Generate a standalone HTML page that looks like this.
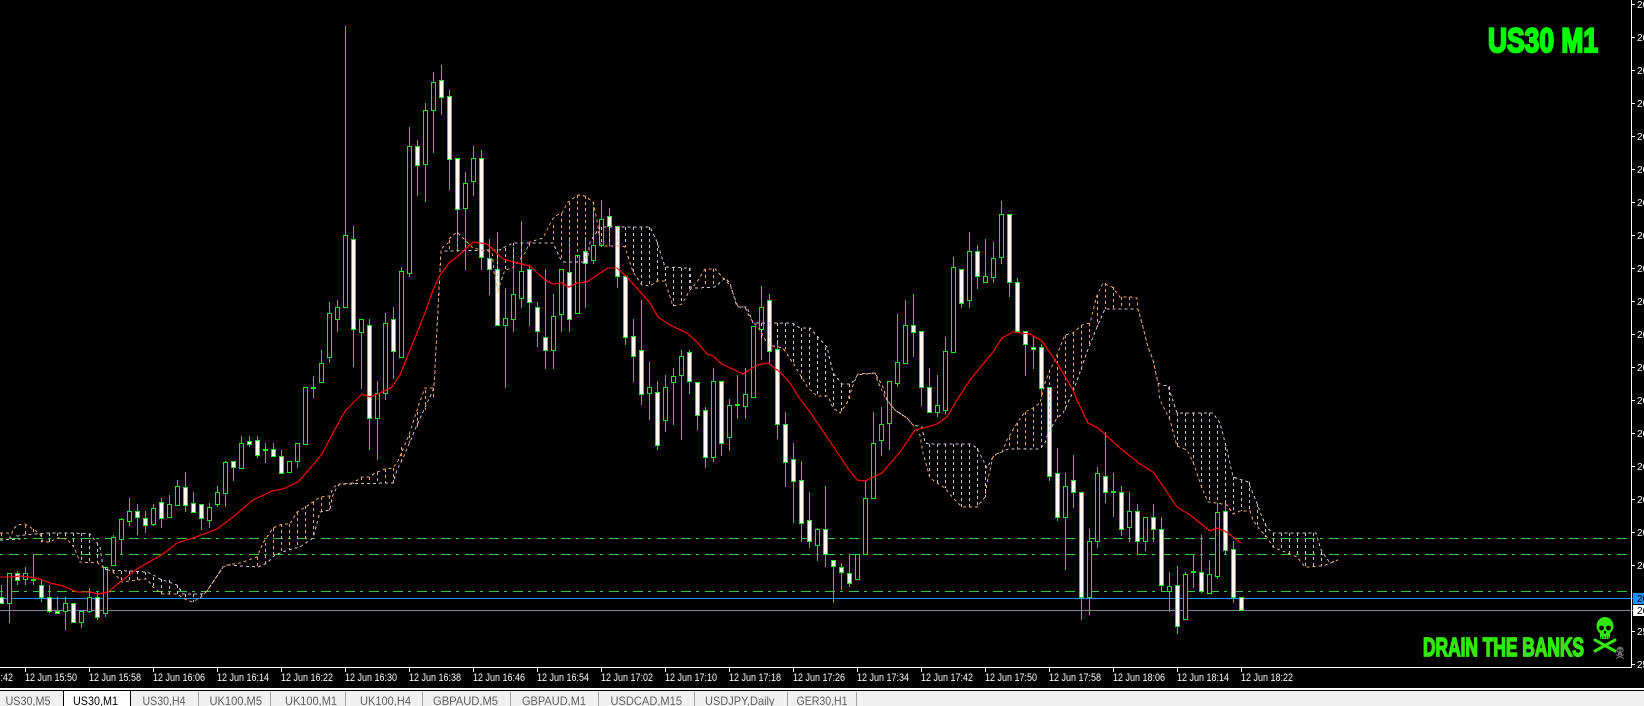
<!DOCTYPE html>
<html><head><meta charset="utf-8"><title>US30 M1</title>
<style>html,body{margin:0;padding:0;background:#000;width:1644px;height:706px;overflow:hidden}svg{display:block}text{font-family:"Liberation Sans",sans-serif}</style>
</head><body>
<svg xmlns="http://www.w3.org/2000/svg" width="1644" height="706" viewBox="0 0 1644 706">
<rect width="1644" height="706" fill="#000"/>
<!-- levels -->
<g shape-rendering="crispEdges" fill="none">
<g stroke="#32cd32" stroke-dasharray="10 5 3 6">
<path d="M-15 538.5H1630M-15 554.5H1630M-15 591.5H1630"/>
</g>
<path d="M0 598.5H1633" stroke="#1e90ff"/>
<path d="M0 610.5H1633" stroke="#778899"/>
</g>
<!-- wicks -->
<path fill="none" stroke="#12e612" shape-rendering="crispEdges" d="M1.5 585V603M9.5 573V623M17.5 571V585M25.5 567V585M33.5 555V585M41.5 580V602M49.5 585V613M57.5 597V613M65.5 597V630M73.5 603V622M81.5 611V628M89.5 588V613M97.5 592V620M105.5 567V617M113.5 535V565M121.5 518V555M129.5 498V526M137.5 504V535M145.5 511V533M153.5 504V526M161.5 498V528M169.5 495V517M177.5 480V505M185.5 472V512M193.5 492V513M201.5 504V530M209.5 503V528M217.5 486V507M225.5 461V507M233.5 461V481M241.5 436V468M249.5 436V447M257.5 436V458M265.5 443V463M273.5 443V457M281.5 450V473M297.5 443V468M313.5 376V398M321.5 350V382M329.5 302V363M337.5 300V332M345.5 26V307M353.5 226V367M361.5 319V389M369.5 319V450M377.5 381V460M385.5 313V400M393.5 307V379M401.5 267V357M409.5 127V277M417.5 140V196M425.5 103V202M433.5 72V153M441.5 65V115M449.5 90V190M457.5 158V252M465.5 172V270M473.5 146V196M481.5 150V270M489.5 239V295M497.5 232V325M505.5 288V388M513.5 247V332M521.5 221V308M529.5 265V326M537.5 302V347M545.5 269V369M553.5 294V369M561.5 269V332M569.5 237V332M585.5 237V308M593.5 207V264M601.5 200V247M609.5 208V246M617.5 226V288M625.5 276V345M633.5 319V382M641.5 300V405M649.5 362V420M657.5 381V450M665.5 375V432M673.5 368V425M681.5 350V440M689.5 350V394M697.5 382V430M705.5 407V468M713.5 368V462M721.5 381V456M729.5 399V451M737.5 375V419M745.5 368V419M761.5 286V360M769.5 294V363M777.5 340V439M785.5 412V487M793.5 443V523M801.5 461V542M809.5 492V548M817.5 528V561M825.5 486V567M833.5 560V603M841.5 563V590M849.5 554V587M865.5 480V554M873.5 412V498M881.5 407V456M889.5 381V450M897.5 314V387M905.5 300V363M913.5 294V357M921.5 331V406M929.5 368V412M937.5 375V417M945.5 337V414M953.5 257V352M961.5 269V308M969.5 232V308M977.5 245V289M985.5 239V282M993.5 242V283M1001.5 201V264M1009.5 214V297M1017.5 278V331M1025.5 331V376M1033.5 337V369M1041.5 344V397M1049.5 387V481M1057.5 448V521M1065.5 473V570M1073.5 455V508M1081.5 492V620M1089.5 529V615M1097.5 467V548M1105.5 432V503M1113.5 473V517M1121.5 486V536M1129.5 492V542M1137.5 504V555M1145.5 517V551M1153.5 504V542M1161.5 517V592M1169.5 572V612M1177.5 566V634M1185.5 572V619M1193.5 554V588M1201.5 535V593M1209.5 560V593M1217.5 503V579M1225.5 500V555M1233.5 541V603M1241.5 597V610"/>
<!-- bear/black bodies -->
<path fill="#000" stroke="#00ff00" shape-rendering="crispEdges" d="M7.5 573.5h4v30h-4zM23.5 573.5h4v6h-4zM63.5 603.5h4v8h-4zM79.5 611.5h4v11h-4zM87.5 597.5h4v14h-4zM103.5 567.5h4v46h-4zM111.5 537.5h4v28h-4zM119.5 519.5h4v20h-4zM127.5 511.5h4v10h-4zM151.5 508.5h4v16h-4zM167.5 504.5h4v13h-4zM175.5 486.5h4v19h-4zM207.5 507.5h4v13h-4zM215.5 492.5h4v12h-4zM223.5 462.5h4v31h-4zM239.5 443.5h4v25h-4zM287.5 461.5h4v11h-4zM295.5 443.5h4v18h-4zM303.5 387.5h4v57h-4zM319.5 363.5h4v19h-4zM327.5 313.5h4v44h-4zM335.5 307.5h4v12h-4zM343.5 235.5h4v72h-4zM359.5 319.5h4v13h-4zM375.5 393.5h4v25h-4zM383.5 323.5h4v70h-4zM399.5 271.5h4v86h-4zM407.5 146.5h4v127h-4zM423.5 110.5h4v54h-4zM431.5 82.5h4v28h-4zM463.5 183.5h4v25h-4zM471.5 158.5h4v23h-4zM503.5 318.5h4v7h-4zM511.5 294.5h4v25h-4zM519.5 271.5h4v27h-4zM551.5 316.5h4v34h-4zM559.5 269.5h4v45h-4zM575.5 255.5h4v58h-4zM591.5 245.5h4v15h-4zM599.5 219.5h4v26h-4zM647.5 387.5h4v6h-4zM663.5 387.5h4v33h-4zM671.5 376.5h4v6h-4zM679.5 356.5h4v19h-4zM711.5 381.5h4v76h-4zM727.5 405.5h4v32h-4zM743.5 394.5h4v12h-4zM751.5 326.5h4v71h-4zM759.5 307.5h4v22h-4zM815.5 529.5h4v16h-4zM855.5 554.5h4v25h-4zM863.5 498.5h4v56h-4zM871.5 443.5h4v55h-4zM879.5 424.5h4v16h-4zM887.5 381.5h4v42h-4zM895.5 362.5h4v21h-4zM903.5 325.5h4v38h-4zM935.5 405.5h4v7h-4zM943.5 351.5h4v59h-4zM951.5 267.5h4v85h-4zM967.5 251.5h4v49h-4zM983.5 276.5h4v6h-4zM991.5 258.5h4v19h-4zM999.5 214.5h4v43h-4zM1063.5 486.5h4v31h-4zM1087.5 541.5h4v56h-4zM1095.5 473.5h4v68h-4zM1127.5 511.5h4v16h-4zM1143.5 517.5h4v24h-4zM1167.5 586.5h4v5h-4zM1183.5 574.5h4v45h-4zM1207.5 574.5h4v19h-4zM1215.5 512.5h4v64h-4z"/>
<!-- white bodies -->
<path fill="#fff" stroke="#00ff00" shape-rendering="crispEdges" d="M-.5 597.5h4v6h-4zM15.5 573.5h4v7h-4zM39.5 585.5h4v12h-4zM47.5 597.5h4v14h-4zM55.5 611.5h4v2h-4zM71.5 603.5h4v19h-4zM95.5 597.5h4v20h-4zM135.5 511.5h4v6h-4zM143.5 518.5h4v7h-4zM159.5 502.5h4v16h-4zM183.5 487.5h4v18h-4zM191.5 503.5h4v9h-4zM199.5 504.5h4v14h-4zM231.5 461.5h4v6h-4zM247.5 441.5h4v3h-4zM255.5 440.5h4v15h-4zM271.5 449.5h4v7h-4zM279.5 456.5h4v17h-4zM351.5 239.5h4v90h-4zM367.5 325.5h4v93h-4zM391.5 319.5h4v32h-4zM415.5 146.5h4v19h-4zM439.5 80.5h4v17h-4zM447.5 96.5h4v63h-4zM455.5 158.5h4v51h-4zM479.5 158.5h4v99h-4zM487.5 258.5h4v11h-4zM495.5 269.5h4v56h-4zM527.5 269.5h4v33h-4zM535.5 307.5h4v24h-4zM543.5 337.5h4v13h-4zM567.5 272.5h4v47h-4zM583.5 251.5h4v12h-4zM607.5 216.5h4v10h-4zM615.5 226.5h4v50h-4zM623.5 276.5h4v61h-4zM631.5 336.5h4v20h-4zM639.5 350.5h4v44h-4zM655.5 392.5h4v53h-4zM687.5 352.5h4v29h-4zM695.5 382.5h4v33h-4zM703.5 410.5h4v47h-4zM719.5 381.5h4v62h-4zM767.5 300.5h4v51h-4zM775.5 349.5h4v75h-4zM783.5 424.5h4v38h-4zM791.5 459.5h4v22h-4zM799.5 480.5h4v43h-4zM807.5 520.5h4v21h-4zM823.5 529.5h4v25h-4zM831.5 560.5h4v6h-4zM839.5 567.5h4v5h-4zM847.5 573.5h4v10h-4zM911.5 325.5h4v7h-4zM919.5 331.5h4v56h-4zM927.5 387.5h4v25h-4zM959.5 269.5h4v34h-4zM975.5 251.5h4v25h-4zM1007.5 214.5h4v68h-4zM1015.5 282.5h4v49h-4zM1023.5 331.5h4v13h-4zM1031.5 347.5h4v2h-4zM1039.5 347.5h4v41h-4zM1047.5 387.5h4v89h-4zM1055.5 473.5h4v44h-4zM1071.5 480.5h4v12h-4zM1079.5 492.5h4v105h-4zM1103.5 476.5h4v16h-4zM1119.5 492.5h4v37h-4zM1135.5 511.5h4v30h-4zM1151.5 517.5h4v12h-4zM1159.5 529.5h4v56h-4zM1175.5 585.5h4v41h-4zM1199.5 572.5h4v19h-4zM1223.5 511.5h4v39h-4zM1231.5 549.5h4v48h-4zM1239.5 597.5h4v13h-4z"/>
<!-- dojis -->
<path fill="#00ff00" stroke="#00ff00" shape-rendering="crispEdges" d="M31.5 579.5h4v1h-4zM263.5 449.5h4v1h-4zM311.5 387.5h4v1h-4zM735.5 404.5h4v1h-4zM1111.5 491.5h4v1h-4zM1191.5 571.5h4v1h-4z"/>
<!-- cloud hatch peach -->
<g fill="none" stroke-dasharray="3 3" shape-rendering="crispEdges">
<path stroke="#f4a460" d="M1.5 533V540M25.5 525V536M33.5 529V534M257.5 557V567M265.5 543V563M273.5 528V555M281.5 524V552M289.5 524V549M297.5 512V547M305.5 506V540M313.5 502V538M321.5 497V511M329.5 496V510M353.5 483V484M361.5 477V483M369.5 477V483M377.5 472V483M385.5 469V483M393.5 468V483M401.5 447V463M409.5 435V443M417.5 412V427M425.5 390V410M433.5 388V400M449.5 240V251M457.5 232V251M465.5 239V250M553.5 225V243M561.5 213V258M569.5 202V262M577.5 195V262M585.5 196V262M593.5 202V240M705.5 269V287M713.5 269V287M1009.5 437V449M1017.5 423V449M1025.5 412V449M1033.5 408V449M1041.5 403V449M1049.5 370V430M1057.5 355V418M1065.5 335V413M1073.5 333V392M1081.5 325V372M1089.5 323V345M1097.5 295V327M1105.5 283V309M1113.5 287V309M1121.5 297V309M1129.5 297V309"/>
<path stroke="#d8bfd8" d="M41.5 534V542M49.5 533V542M57.5 533V538M65.5 533V539M73.5 533V547M81.5 533V562M89.5 534V563M97.5 543V563M105.5 567V570M113.5 571V572M121.5 571V582M129.5 571V580M137.5 571V580M145.5 572V579M153.5 577V587M161.5 579V594M169.5 580V594M177.5 585V594M185.5 594V598M193.5 594V602M201.5 594V598M497.5 249V293M505.5 248V271M513.5 243V268M521.5 243V260M529.5 243V246M601.5 227V246M609.5 227V246M617.5 227V246M625.5 227V247M633.5 227V272M641.5 227V285M649.5 227V286M657.5 242V281M665.5 267V281M673.5 268V306M681.5 268V304M689.5 268V290M761.5 323V338M769.5 323V345M777.5 323V347M785.5 323V349M793.5 323V363M801.5 328V382M809.5 328V388M817.5 337V396M825.5 347V397M833.5 373V408M841.5 384V413M849.5 384V402M929.5 444V478M937.5 444V483M945.5 444V488M953.5 444V498M961.5 444V507M969.5 444V507M977.5 448V507M985.5 465V497M1169.5 386V420M1177.5 413V446M1185.5 413V450M1193.5 413V462M1201.5 413V488M1209.5 413V503M1217.5 425V503M1225.5 447V505M1233.5 477V514M1241.5 480V511M1249.5 482V511M1257.5 504V525M1265.5 523V537M1273.5 533V547M1281.5 533V550M1289.5 533V554M1297.5 533V557M1305.5 533V567M1313.5 533V566M1321.5 552V566"/>
</g>
<!-- cloud spans -->
<polyline fill="none" stroke="#d8bfd8" stroke-dasharray="3 3" shape-rendering="crispEdges" points="0,540 20,539 17,536 33,534 50,533 73,533 90,534 100,547 103,567 107,570 130,571 147,572 157,577 160,579 177,585 183,594 202,594 207,591 223,567 227,565 258,567 267,563 275,555 288,550 300,547 313,538 320,512 330,510 332,497 337,487 340,484 393,483 397,470 404,456 417,425 434,388 441,251 500,250 503,248 513,243 553,243 560,258 563,262 587,262 590,242 600,227 650,227 657,242 665,267 690,268 691,288 698,288 715,287 725,278 730,283 737,307 747,307 753,323 792,323 800,328 810,328 818,337 827,347 833,373 842,384 850,384 855,380 857,375 875,373 883,387 887,400 895,410 907,418 913,425 922,427 925,443 930,444 970,444 977,448 987,468 993,457 998,453 1002,452 1008,449 1040,449 1045,443 1048,433 1057,418 1063,413 1073,392 1080,372 1087,352 1097,327 1105,309 1138,309 1143,327 1148,347 1153,360 1158,383 1162,385 1168,386 1177,413 1213,413 1220,423 1227,450 1233,477 1248,482 1255,498 1262,517 1267,528 1273,533 1316,533 1321,550 1330,563 1338,560"/>
<polyline fill="none" stroke="#f4a460" stroke-dasharray="3 3" shape-rendering="crispEdges" points="0,533 8,533 10,538 13,530 17,525 25,524 33,529 40,534 43,542 50,542 57,538 67,539 74,547 80,562 98,563 102,567 113,572 122,582 137,580 147,579 153,587 162,594 177,594 183,598 192,602 200,598 207,591 223,567 227,565 240,563 257,557 263,543 273,528 282,524 290,524 297,512 307,506 313,502 320,497 330,496 333,488 338,484 353,483 362,477 369,477 375,473 385,469 393,468 398,461 409,435 419,404 425,388 434,388 441,250 443,247 448,243 450,238 457,232 463,238 473,248 492,252 494,272 498,290 505,270 513,268 525,253 530,242 543,238 552,220 555,216 562,213 568,202 578,195 585,196 593,202 597,220 600,242 602,246 622,246 625,247 633,272 642,285 650,286 657,281 665,281 673,306 682,304 690,290 697,282 705,269 715,269 725,280 730,285 738,307 745,307 750,318 760,330 768,345 783,348 793,363 808,388 817,396 828,396 833,408 840,413 847,403 853,385 858,374 875,373 878,382 885,397 887,400 895,410 907,418 913,425 920,435 923,453 930,478 937,483 945,488 953,498 962,507 977,507 985,497 987,483 990,470 993,457 998,453 1002,452 1007,440 1017,423 1025,412 1033,408 1040,403 1045,383 1050,370 1055,360 1060,347 1065,335 1073,333 1082,325 1090,323 1097,295 1103,283 1112,287 1120,297 1130,297 1137,298 1138,309 1143,327 1148,347 1153,360 1158,383 1160,400 1170,420 1177,446 1187,450 1193,462 1202,488 1208,502 1217,503 1227,505 1233,514 1240,511 1250,511 1253,520 1260,530 1267,537 1273,547 1280,550 1290,554 1297,557 1305,567 1323,566 1338,560"/>
<!-- red MA -->
<polyline fill="none" stroke="#ff0000" stroke-width="1.2" shape-rendering="crispEdges" points="0,577 10,577 20,576 30,577 40,579 50,583 63,586 77,592 90,592 98,594 108,592 120,582 137,569 163,554 177,543 193,538 217,529 233,517 253,500 272,491 283,489 298,482 313,465 322,454 333,433 340,420 346,410 356,400 362,394 370,397 380,393 392,387 400,375 410,350 425,313 433,290 440,275 450,262 457,257 473,242 487,244 503,259 517,263 530,266 545,280 553,284 562,283 569,287 577,283 587,282 600,273 608,268 617,268 627,277 643,295 650,303 658,317 670,325 687,333 697,342 707,354 713,356 722,364 743,374 757,365 768,363 780,372 790,383 800,399 810,412 827,437 847,467 857,480 865,481 882,473 900,452 915,430 927,427 937,424 947,417 957,400 970,380 993,352 1002,338 1013,332 1030,334 1042,341 1057,363 1073,390 1077,400 1088,423 1098,428 1120,448 1140,464 1153,472 1163,486 1177,507 1190,515 1210,531 1217,528 1225,531 1241,543"/>
<!-- titles -->
<text x="1488" y="52" font-size="34" font-weight="700" fill="#00ff00" stroke="#00ff00" stroke-width="2.2" textLength="110" lengthAdjust="spacingAndGlyphs">US30 M1</text>
<text x="1423" y="656" font-size="26" font-weight="700" fill="#32e80a" stroke="#32e80a" stroke-width="1.7" textLength="161" lengthAdjust="spacingAndGlyphs">DRAIN THE BANKS</text>
<!-- skull -->
<g fill="#32e80a">
<ellipse cx="1605" cy="626" rx="8.5" ry="9"/>
<rect x="1600" y="630" width="10" height="9" rx="2"/>
<g stroke="#32e80a" stroke-width="3" stroke-linecap="round"><path d="M1595 651L1615 640M1595 640L1615 651"/></g>
<circle cx="1601.5" cy="628" r="2.4" fill="#000"/><circle cx="1608.5" cy="628" r="2.4" fill="#000"/>
<rect x="1604" y="631" width="2" height="2.5" fill="#000"/>
<path d="M1601.5 636.5v2M1604 636.5v2M1606.5 636.5v2M1609 636.5v2" stroke="#000" stroke-width=".7"/>
</g>
<g fill="#6a6a6a">
<ellipse cx="1620" cy="650" rx="3.6" ry="3.4"/>
<rect x="1618" y="652" width="4" height="3"/>
<path d="M1616 658.5L1624 654.5M1616 654.5L1624 658.5" stroke="#6a6a6a" stroke-width="1.2"/>
<circle cx="1618.5" cy="650.5" r="1" fill="#000"/><circle cx="1621.5" cy="650.5" r="1" fill="#000"/>
</g>
<!-- price axis -->
<g shape-rendering="crispEdges" fill="none" stroke="#fff">
<path d="M1631.5 0V667.5M0 667.5H1632"/>
<path d="M1632 4.5h3M1632 37.5h3M1632 70.5h3M1632 103.5h3M1632 136.5h3M1632 169.5h3M1632 202.5h3M1632 235.5h3M1632 268.5h3M1632 301.5h3M1632 334.5h3M1632 367.5h3M1632 400.5h3M1632 433.5h3M1632 466.5h3M1632 499.5h3M1632 532.5h3M1632 565.5h3M1632 631.5h3M1632 664.5h3"/>
</g>
<g font-size="10" fill="#fff">
<text x="1637" y="8">26</text><text x="1637" y="41">26</text><text x="1637" y="74">26</text><text x="1637" y="107">26</text><text x="1637" y="140">26</text><text x="1637" y="173">26</text><text x="1637" y="206">26</text><text x="1637" y="239">26</text><text x="1637" y="272">26</text><text x="1637" y="305">26</text><text x="1637" y="338">26</text><text x="1637" y="371">26</text><text x="1637" y="404">26</text><text x="1637" y="437">26</text><text x="1637" y="470">26</text><text x="1637" y="503">26</text><text x="1637" y="536">26</text><text x="1637" y="569">26</text><text x="1637" y="635">25</text><text x="1637" y="668">25</text>
</g>
<rect x="1633" y="593" width="11" height="11" fill="#1e90ff"/>
<rect x="1633" y="605" width="11" height="11" fill="#fff"/>
<text x="1637" y="602" font-size="10" fill="#000">26</text>
<text x="1637" y="614" font-size="10" fill="#000">26</text>
<!-- time axis -->
<path stroke="#fff" fill="none" shape-rendering="crispEdges" d="M25.5 668v4M89.5 668v4M153.5 668v4M217.5 668v4M281.5 668v4M345.5 668v4M409.5 668v4M473.5 668v4M537.5 668v4M601.5 668v4M665.5 668v4M729.5 668v4M793.5 668v4M857.5 668v4M921.5 668v4M985.5 668v4M1049.5 668v4M1113.5 668v4M1177.5 668v4M1241.5 668v4"/>
<g font-size="11" fill="#fff">
<text x="-39" y="681" textLength="52" lengthAdjust="spacingAndGlyphs">12 Jun 15:42</text>
<text x="25" y="681" textLength="52" lengthAdjust="spacingAndGlyphs">12 Jun 15:50</text>
<text x="89" y="681" textLength="52" lengthAdjust="spacingAndGlyphs">12 Jun 15:58</text>
<text x="153" y="681" textLength="52" lengthAdjust="spacingAndGlyphs">12 Jun 16:06</text>
<text x="217" y="681" textLength="52" lengthAdjust="spacingAndGlyphs">12 Jun 16:14</text>
<text x="281" y="681" textLength="52" lengthAdjust="spacingAndGlyphs">12 Jun 16:22</text>
<text x="345" y="681" textLength="52" lengthAdjust="spacingAndGlyphs">12 Jun 16:30</text>
<text x="409" y="681" textLength="52" lengthAdjust="spacingAndGlyphs">12 Jun 16:38</text>
<text x="473" y="681" textLength="52" lengthAdjust="spacingAndGlyphs">12 Jun 16:46</text>
<text x="537" y="681" textLength="52" lengthAdjust="spacingAndGlyphs">12 Jun 16:54</text>
<text x="601" y="681" textLength="52" lengthAdjust="spacingAndGlyphs">12 Jun 17:02</text>
<text x="665" y="681" textLength="52" lengthAdjust="spacingAndGlyphs">12 Jun 17:10</text>
<text x="729" y="681" textLength="52" lengthAdjust="spacingAndGlyphs">12 Jun 17:18</text>
<text x="793" y="681" textLength="52" lengthAdjust="spacingAndGlyphs">12 Jun 17:26</text>
<text x="857" y="681" textLength="52" lengthAdjust="spacingAndGlyphs">12 Jun 17:34</text>
<text x="921" y="681" textLength="52" lengthAdjust="spacingAndGlyphs">12 Jun 17:42</text>
<text x="985" y="681" textLength="52" lengthAdjust="spacingAndGlyphs">12 Jun 17:50</text>
<text x="1049" y="681" textLength="52" lengthAdjust="spacingAndGlyphs">12 Jun 17:58</text>
<text x="1113" y="681" textLength="52" lengthAdjust="spacingAndGlyphs">12 Jun 18:06</text>
<text x="1177" y="681" textLength="52" lengthAdjust="spacingAndGlyphs">12 Jun 18:14</text>
<text x="1241" y="681" textLength="52" lengthAdjust="spacingAndGlyphs">12 Jun 18:22</text>
</g>
<!-- tab bar -->
<rect x="0" y="688" width="1644" height="2" fill="#fff"/>
<rect x="0" y="690" width="1644" height="1" fill="#000"/>
<rect x="0" y="691" width="1644" height="15" fill="#f0f0f0"/>
<rect x="63" y="690" width="68" height="16" fill="#000"/>
<rect x="64" y="691" width="66" height="15" fill="#fff"/>
<path stroke="#a0a0a0" fill="none" shape-rendering="crispEdges" d="M198.500 692V706M270.500 692V706M345.500 692V706M422.500 692V706M510.500 692V706M598.500 692V706M694.500 692V706M787.500 692V706M856.500 692V706"/>
<g font-size="12" fill="#606060">
<text x="5.500" y="705" textLength="45" lengthAdjust="spacingAndGlyphs">US30,M5</text>
<text x="73" y="705" fill="#000" textLength="45" lengthAdjust="spacingAndGlyphs">US30,M1</text>
<text x="142.500" y="705" textLength="43" lengthAdjust="spacingAndGlyphs">US30,H4</text>
<text x="209.500" y="705" textLength="52.500" lengthAdjust="spacingAndGlyphs">UK100,M5</text>
<text x="285" y="705" textLength="52" lengthAdjust="spacingAndGlyphs">UK100,M1</text>
<text x="360" y="705" textLength="51" lengthAdjust="spacingAndGlyphs">UK100,H4</text>
<text x="433" y="705" textLength="65" lengthAdjust="spacingAndGlyphs">GBPAUD,M5</text>
<text x="522" y="705" textLength="64" lengthAdjust="spacingAndGlyphs">GBPAUD,M1</text>
<text x="610.500" y="705" textLength="71.500" lengthAdjust="spacingAndGlyphs">USDCAD,M15</text>
<text x="705" y="705" textLength="69.500" lengthAdjust="spacingAndGlyphs">USDJPY,Daily</text>
<text x="796.500" y="705" textLength="51" lengthAdjust="spacingAndGlyphs">GER30,H1</text>
</g>
</svg>
</body></html>
